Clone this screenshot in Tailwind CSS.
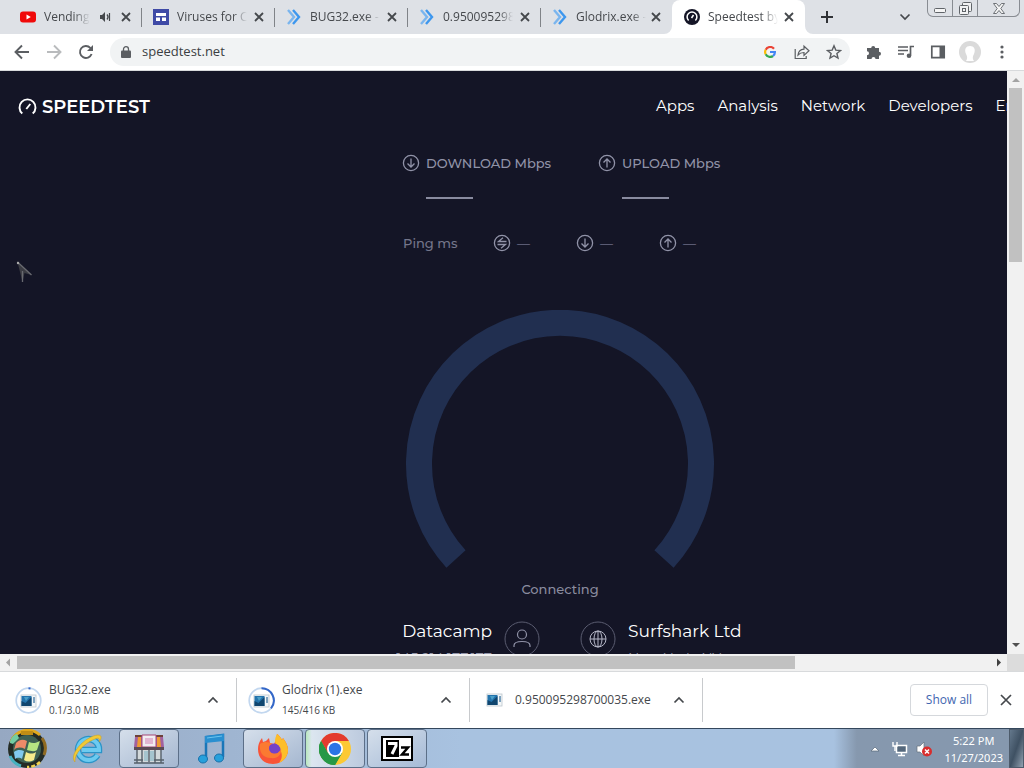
<!DOCTYPE html>
<html lang="en">
<head>
    <meta charset="UTF-8">
    <meta name="viewport" content="width=device-width, initial-scale=1.0">
    <title>Speedtest by Ookla</title>
    <script src="https://cdn.jsdelivr.net/npm/@tailwindcss/browser@4"></script>
</head>
<body class="h-screen overflow-hidden flex flex-col bg-white font-['Open_Sans','Noto_Sans',sans-serif] text-[#45484c]">
    <!-- Shared symbols -->
    <svg class="hidden">
        <symbol id="close" viewBox="0 0 12 12"><path d="M2 2l8 8M10 2l-8 8" fill="none" stroke="currentColor" stroke-width="1.8"/></symbol>
        <symbol id="chevrons" viewBox="0 0 16 16"><path d="M2 1l6 7-6 7" fill="none" stroke="#7ab5ee" stroke-width="2.4"/><path d="M7 1l6 7-6 7" fill="none" stroke="#3d97ee" stroke-width="2.4"/></symbol>
        <symbol id="up" viewBox="0 0 12 12"><path d="M1.500 8.500L6 4l4.500 4.500" fill="none" stroke="currentColor" stroke-width="1.7"/></symbol>
        <symbol id="circle-down" viewBox="0 0 18 18"><g fill="none" stroke="currentColor" stroke-width="1.3"><circle cx="9" cy="9" r="7.600"/><path d="M9 4.500v8.500M5.500 9.500L9 13l3.500-3.500"/></g></symbol>
        <symbol id="circle-up" viewBox="0 0 18 18"><g fill="none" stroke="currentColor" stroke-width="1.3"><circle cx="9" cy="9" r="7.600"/><path d="M9 13.500V5M5.500 8.500L9 5l3.500 3.500"/></g></symbol>
        <symbol id="exe" viewBox="0 0 18 16">
            <rect x="1" y="2" width="15" height="12" fill="#f4f7f8" stroke="#bcc6cc" stroke-width=".8"/>
            <rect x="1.500" y="3" width="10" height="10" fill="#2374ad"/>
            <path d="M1.500 13V8l4 2 6-6v9z" fill="#10466f"/>
            <path d="M4 4h5l-3 4z" fill="#4ba0c8"/>
            <path d="M14 4v6" stroke="#5686ad" stroke-width="1.500"/>
        </symbol>
    </svg>

    <!-- Tab strip -->
    <div class="h-[34px] shrink-0 flex bg-[#dee1e6] text-xs">
        <div class="flex flex-1 min-w-0 pl-[9px]">
            <div class="w-[133px] flex items-center pl-[11px] pr-2.5 relative">
                <svg class="w-4 h-4 shrink-0" viewBox="0 0 16 16"><rect y="2.500" width="16" height="11" rx="3" fill="#f00a0a"/><path d="M6.500 5.500v5L10.800 8z" fill="#fff"/></svg>
                <span class="ml-2 w-[46px] overflow-hidden whitespace-nowrap [mask-image:linear-gradient(to_right,black_65%,transparent)]">Vending Machine</span>
                <svg class="w-3 h-3 ml-2.5 shrink-0" viewBox="0 0 12 12"><path d="M0 4h2l3-3v10L2 8H0z" fill="#45484c"/><path d="M7 3.500c1.300 1.500 1.300 3.500 0 5M9.500 2v8" fill="none" stroke="#45484c" stroke-width="1.200"/></svg>
                <button aria-label="Close tab" class="ml-auto"><svg class="w-3 h-3"><use href="#close"/></svg></button>
                <span class="absolute right-0 top-2 h-[19px] w-px bg-[#808388]"></span>
            </div>
            <div class="w-[133px] flex items-center pl-[11px] pr-2.5 relative">
                <svg class="w-4 h-4 shrink-0" viewBox="0 0 16 16"><rect width="16" height="16" fill="#3f4aa6"/><path d="M3 4h10v3H3zM3 8.500h4V12H3zM9 8.500h4V12H9z" fill="#fff"/></svg>
                <span class="ml-2 w-[70px] overflow-hidden whitespace-nowrap [mask-image:linear-gradient(to_right,black_80%,transparent)]">Viruses for Computers</span>
                <button aria-label="Close tab" class="ml-auto"><svg class="w-3 h-3"><use href="#close"/></svg></button>
                <span class="absolute right-0 top-2 h-[19px] w-px bg-[#808388]"></span>
            </div>
            <div class="w-[133px] flex items-center pl-[11px] pr-2.5 relative">
                <svg class="w-4 h-4 shrink-0"><use href="#chevrons"/></svg>
                <span class="ml-2 w-[70px] overflow-hidden whitespace-nowrap [mask-image:linear-gradient(to_right,black_80%,transparent)]">BUG32.exe - Download</span>
                <button aria-label="Close tab" class="ml-auto"><svg class="w-3 h-3"><use href="#close"/></svg></button>
                <span class="absolute right-0 top-2 h-[19px] w-px bg-[#808388]"></span>
            </div>
            <div class="w-[133px] flex items-center pl-[11px] pr-2.5 relative">
                <svg class="w-4 h-4 shrink-0"><use href="#chevrons"/></svg>
                <span class="ml-2 w-[70px] overflow-hidden whitespace-nowrap [mask-image:linear-gradient(to_right,black_80%,transparent)]">0.950095298700035.exe</span>
                <button aria-label="Close tab" class="ml-auto"><svg class="w-3 h-3"><use href="#close"/></svg></button>
                <span class="absolute right-0 top-2 h-[19px] w-px bg-[#808388]"></span>
            </div>
            <div class="w-[131px] flex items-center pl-[11px] pr-2.5">
                <svg class="w-4 h-4 shrink-0"><use href="#chevrons"/></svg>
                <span class="ml-2 w-[70px] overflow-hidden whitespace-nowrap [mask-image:linear-gradient(to_right,black_80%,transparent)]">Glodrix.exe - Download</span>
                <button aria-label="Close tab" class="ml-auto"><svg class="w-3 h-3"><use href="#close"/></svg></button>
            </div>
            <div class="w-[133px] flex items-center pl-3 pr-2.5 rounded-t-lg bg-white relative">
                <svg class="absolute bottom-0 -left-2 w-2 h-2" viewBox="0 0 8 8"><path d="M8 0v8H0a8 8 0 0 0 8-8z" fill="#fff"/></svg>
                <svg class="absolute bottom-0 -right-2 w-2 h-2" viewBox="0 0 8 8"><path d="M0 0v8h8a8 8 0 0 1-8-8z" fill="#fff"/></svg>
                <svg class="w-4 h-4 shrink-0" viewBox="0 0 16 16"><circle cx="8" cy="8" r="8" fill="#141526"/><path d="M4.600 11.500a4.900 4.900 0 1 1 6.800 0" fill="none" stroke="#fff" stroke-width="1.500"/><path d="M7.500 9l2-3" stroke="#fff" stroke-width="1.500"/></svg>
                <span class="ml-2 w-[70px] overflow-hidden whitespace-nowrap [mask-image:linear-gradient(to_right,black_75%,transparent)]">Speedtest by Ookla</span>
                <button aria-label="Close tab" class="ml-auto"><svg class="w-3 h-3"><use href="#close"/></svg></button>
            </div>
            <button aria-label="New tab" class="ml-4"><svg class="w-3 h-3" viewBox="0 0 12 12"><path d="M6 0v12M0 6h12" stroke="#303236" stroke-width="2"/></svg></button>
        </div>
        <button aria-label="Search tabs" class="mr-4"><svg class="w-3 h-3 rotate-180"><use href="#up"/></svg></button>
        <div class="h-[17px] w-[93px] mr-1 shrink-0 flex border border-t-0 border-[#888c92] rounded-b-md divide-x divide-[#888c92]">
            <button aria-label="Minimize" class="w-[25px] grid place-items-center"><svg class="w-3 h-3 mt-1" viewBox="0 0 12 12"><rect x=".5" y="4.500" width="11" height="4" rx="1" fill="#f5f5f5" stroke="#606469"/></svg></button>
            <button aria-label="Restore" class="w-[25px] grid place-items-center"><svg class="w-[13px] h-[13px]" viewBox="0 0 13 13"><g fill="#f1f2f3" stroke="#606469"><rect x="3.500" y=".5" width="9" height="9" rx="1"/><rect x=".5" y="3.500" width="9" height="9" rx="1"/><rect x="3.500" y="6.500" width="3" height="3"/></g></svg></button>
            <button aria-label="Close window" class="flex-1 grid place-items-center"><svg class="w-3 h-[11px]" viewBox="0 0 12 11"><path d="M.5.5h3L6 3.500 8.500.5h3l-3.700 5 3.700 5h-3L6 7.500l-2.500 3h-3l3.700-5z" fill="#f5f5f5" stroke="#606469" stroke-width=".9"/></svg></button>
        </div>
    </div>

    <!-- Toolbar -->
    <div class="h-[37px] shrink-0 flex items-center pl-3.5 pr-3.5 border-b border-[#d8dadc] text-[#5b5e62]">
        <button aria-label="Back"><svg class="w-4 h-4" viewBox="0 0 16 16"><path d="M15 8H2M8 1.500L1.500 8 8 14.500" fill="none" stroke="currentColor" stroke-width="1.900"/></svg></button>
        <button aria-label="Forward" class="ml-4 text-[#b9bbbd]"><svg class="w-4 h-4" viewBox="0 0 16 16"><path d="M1 8h13M8 1.500L14.500 8 8 14.500" fill="none" stroke="currentColor" stroke-width="1.900"/></svg></button>
        <button aria-label="Reload" class="ml-4"><svg class="w-4 h-4" viewBox="0 0 16 16"><path d="M13.600 10A6 6 0 1 1 12.300 3.800L14 5.500" fill="none" stroke="currentColor" stroke-width="1.900"/><path d="M15 1v6H9z" fill="currentColor"/></svg></button>
        <div class="ml-4 h-7 flex-1 flex items-center rounded-full bg-[#f1f3f4] pl-[11px] pr-2">
            <svg class="w-2.5 h-3 shrink-0" viewBox="0 0 10 12"><rect y="4.500" width="10" height="7.500" rx="1" fill="#5b5e62"/><path d="M2.500 5V3.200a2.500 2.500 0 0 1 5 0V5" fill="none" stroke="#5b5e62" stroke-width="1.300"/></svg>
            <input type="text" aria-label="Address" value="speedtest.net" class="ml-[11px] flex-1 min-w-0 bg-transparent text-[13px] text-[#3b3e42] outline-none">
            <svg class="w-3 h-3 shrink-0" viewBox="0 0 12 12"><g fill="none" stroke-width="2.200"><path d="M10 2.800A5 5 0 0 0 1.700 3.700" stroke="#ea4335"/><path d="M1.700 3.700a5 5 0 0 0 0 4.600" stroke="#fbbc05"/><path d="M1.700 8.300A5 5 0 0 0 9 10" stroke="#34a853"/><path d="M9 10a5 5 0 0 0 1.900-4H6" stroke="#4285f4"/></g></svg>
            <button aria-label="Share" class="ml-[18px]"><svg class="w-4 h-4" viewBox="0 0 16 16"><g fill="none" stroke="currentColor" stroke-width="1.200"><path d="M1.200 5v9.500h11V12"/><path d="M4 11c.5-4 2.500-5.600 6-5.800V2.200l5 4.600-5 4.600V8.500C7 8.500 5.500 9.300 4 11z"/></g></svg></button>
            <button aria-label="Bookmark" class="ml-4"><svg class="w-4 h-4" viewBox="0 0 16 16"><path d="M8 1.800l1.800 4.300 4.700.4-3.600 3 1.100 4.600L8 11.700l-4 2.400 1.100-4.600-3.600-3 4.700-.4z" fill="none" stroke="currentColor" stroke-width="1.400"/></svg></button>
        </div>
        <div class="flex items-center gap-4 ml-4">
            <button aria-label="Extensions"><svg class="w-4 h-4" viewBox="0 0 16 16"><path d="M1 4h4.200a2 2 0 1 1 4 0H13v3.800a2 2 0 1 1 0 4V15H9.500a2 2 0 1 0-4 0H1v-3.700a2 2 0 1 0 0-4z" fill="currentColor"/></svg></button>
            <button aria-label="Media"><svg class="w-4 h-4" viewBox="0 0 16 16"><path d="M0 3h10M0 6.500h10M0 10h6M12.500 11.500V2.500H16" fill="none" stroke="currentColor" stroke-width="1.700"/><circle cx="11" cy="11.800" r="2.300" fill="currentColor"/></svg></button>
            <button aria-label="Side panel"><svg class="w-4 h-4" viewBox="0 0 16 16"><path d="M1.800 2.300h12.400v11.400H1.800z" fill="none" stroke="currentColor" stroke-width="1.700"/><path d="M9.500 2h5v12h-5z" fill="currentColor"/></svg></button>
        </div>
        <button aria-label="Profile" class="ml-[13px]"><svg class="w-[22px] h-[22px]" viewBox="0 0 22 22"><circle cx="11" cy="11" r="11" fill="#dadada"/><path d="M7 20c2-3 1-5 0-7-2-5 0-8 4-8s6 3 4 8c-1 2-2 4 0 7z" fill="#fff"/></svg></button>
        <button aria-label="Menu" class="ml-[13px]"><svg class="w-4 h-4" viewBox="0 0 16 16"><g fill="currentColor"><circle cx="8" cy="3" r="1.600"/><circle cx="8" cy="8" r="1.600"/><circle cx="8" cy="13" r="1.600"/></g></svg></button>
    </div>

    <!-- Page and vertical scrollbar -->
    <div class="flex-1 min-h-0 flex">
        <main class="flex-1 min-w-0 overflow-hidden relative bg-[#141526] text-white font-['Montserrat','Inter',sans-serif]">
            <div class="min-w-[1120px]">
                <header class="h-[71px] flex items-center pl-[18px]">
                    <a href="#" class="flex items-center text-lg font-semibold w-[638px]">
                        <svg class="w-[19px] h-[19px]" viewBox="0 0 19 19"><path d="M4.300 16.500a8 8 0 1 1 10.400 0" fill="none" stroke="#fff" stroke-width="1.900"/><path d="M8.300 12l4-5" stroke="#fff" stroke-width="1.900"/></svg>
                        <span class="ml-[5px]">SPEEDTEST</span>
                    </a>
                    <nav class="flex gap-[23px] text-[15px]">
                        <a href="#">Apps</a>
                        <a href="#">Analysis</a>
                        <a href="#">Network</a>
                        <a href="#">Developers</a>
                        <a href="#">Enterprise</a>
                    </nav>
                </header>

                <section class="w-[316px] mx-auto mt-[11px] text-[13px] leading-5 text-[#9193a8] whitespace-nowrap">
                    <div class="grid grid-cols-[196px_1fr] font-medium">
                        <div>
                            <div class="flex items-center gap-1.5"><svg class="w-[18px] h-[18px] shrink-0"><use href="#circle-down"/></svg>DOWNLOAD Mbps</div>
                            <div class="ml-6 mt-6 w-[47px] h-0.5 bg-[#898b9f]"></div>
                        </div>
                        <div>
                            <div class="flex items-center gap-1.5"><svg class="w-[18px] h-[18px] shrink-0"><use href="#circle-up"/></svg>UPLOAD Mbps</div>
                            <div class="ml-6 mt-6 w-[47px] h-0.5 bg-[#898b9f]"></div>
                        </div>
                    </div>
                    <div class="mt-[34px] flex items-center">
                        <span class="w-[91px] pl-px font-medium text-[#74768b]">Ping ms</span>
                        <span class="w-[83px] flex items-center gap-1.5">
                            <svg class="w-[18px] h-[18px]" viewBox="0 0 18 18"><g fill="none" stroke="currentColor" stroke-width="1.300"><circle cx="9" cy="9" r="7.600"/><path d="M13.500 7.500H5.500L10 3.800M4.500 10.500h8L8 14.200"/></g></svg>—
                        </span>
                        <span class="w-[83px] flex items-center gap-1.5"><svg class="w-[18px] h-[18px]"><use href="#circle-down"/></svg>—</span>
                        <span class="flex items-center gap-1.5"><svg class="w-[18px] h-[18px]"><use href="#circle-up"/></svg>—</span>
                    </div>
                </section>

                <svg class="block w-[308px] h-[260px] mx-auto mt-[57px]" viewBox="0 0 308 260"><path d="M50 249A141 141 0 1 1 258 249" fill="none" stroke="#212f50" stroke-width="26"/></svg>
                <p class="mt-[9px] text-center text-[13px] leading-5 font-medium text-[#8a8c9f]">Connecting</p>

                <section class="mt-5 grid grid-cols-2 gap-10">
                    <div class="flex justify-end gap-3 text-right">
                        <div>
                            <div class="text-[17px] leading-6">Datacamp</div>
                            <div class="mt-1.5 text-sm text-[#9193a8]">145.214.177.177</div>
                        </div>
                        <svg class="mt-0.5 w-9 h-9" viewBox="0 0 36 36"><g fill="none" stroke="#9193a8"><circle cx="18" cy="18" r="17" stroke="#5a5c70"/><circle cx="18" cy="13.500" r="4.500" stroke-width="1.200"/><path d="M10 26v-1.500c0-3 3-4 8-4s8 1 8 4V26" stroke-width="1.200"/></g></svg>
                    </div>
                    <div class="flex gap-3">
                        <svg class="mt-0.5 w-9 h-9" viewBox="0 0 36 36"><g fill="none" stroke="#b6b8c8"><circle cx="18" cy="18" r="17" stroke="#5a5c70"/><circle cx="18" cy="18" r="8"/><ellipse cx="18" cy="18" rx="4" ry="8"/><path d="M18 10v16M10 18h16"/></g></svg>
                        <div>
                            <div class="text-[17px] leading-6">Surfshark Ltd</div>
                            <div class="mt-1.5 text-sm text-[#9193a8]">New York, NY</div>
                        </div>
                    </div>
                </section>
            </div>
            <!-- Mouse pointer -->
            <svg class="absolute left-4 top-[190px] w-[18px] h-6" viewBox="0 0 18 24"><path d="M1.500 1l14 13-7-2-2 9z" fill="#3b3c43"/><path d="M1.500 1l14 13M6.500 10v11" fill="none" stroke="#696a70" stroke-width="1.300"/><circle cx="2" cy="2" r="1.200" fill="#aaa"/></svg>
        </main>
        <div class="w-[17px] shrink-0 flex flex-col items-center bg-[#f1f1f1]">
            <svg class="w-[17px] h-[17px]" viewBox="0 0 17 17"><path d="M5 11h8L9 7z" fill="#a3a3a3"/></svg>
            <div class="w-[13px] h-[174px] bg-[#c1c1c1]"></div>
            <svg class="w-[17px] h-[17px] mt-auto" viewBox="0 0 17 17"><path d="M5 6h8l-4 4z" fill="#505050"/></svg>
        </div>
    </div>

    <!-- Horizontal scrollbar -->
    <div class="h-[17px] shrink-0 flex items-center bg-[#f1f1f1]">
        <svg class="w-[17px] h-[17px]" viewBox="0 0 17 17"><path d="M10 4.500v8l-4-4z" fill="#a3a3a3"/></svg>
        <div class="w-[76%] h-[13px] bg-[#c1c1c1]"></div>
        <svg class="w-[17px] h-[17px] ml-auto" viewBox="0 0 17 17"><path d="M7 4.500v8l4-4z" fill="#404040"/></svg>
        <div class="w-[17px] h-full bg-[#dcdcdc]"></div>
    </div>

    <!-- Downloads -->
    <div class="h-[57px] shrink-0 flex items-center border-t border-[#d8dadc] text-xs">
        <div class="w-[237px] h-11 flex items-center pl-[15px] pr-[17px] border-r border-[#c8cacd]">
            <svg class="w-[27px] h-[27px]" viewBox="0 0 27 27"><circle cx="13.500" cy="13.500" r="12.300" fill="none" stroke="#c2d7ef" stroke-width="1.700"/><path d="M13.500 1.200l2 .2" stroke="#3467c8" stroke-width="2"/><use href="#exe" x="5" y="6" width="18" height="16"/></svg>
            <div class="ml-[7px]"><div class="leading-5">BUG32.exe</div><div class="text-[10px] leading-5">0.1/3.0 MB</div></div>
            <button aria-label="Options for BUG32.exe" class="ml-auto"><svg class="w-3 h-3"><use href="#up"/></svg></button>
        </div>
        <div class="w-[233px] h-11 flex items-center pl-[11px] pr-[17px] border-r border-[#c8cacd]">
            <svg class="w-[27px] h-[27px]" viewBox="0 0 27 27"><circle cx="13.500" cy="13.500" r="12.300" fill="none" stroke="#c2d7ef" stroke-width="1.700"/><path d="M13.500 1.200A12.300 12.300 0 0 1 23 21.300" fill="none" stroke="#3467c8" stroke-width="2"/><use href="#exe" x="5" y="6" width="18" height="16"/></svg>
            <div class="ml-[7px]"><div class="leading-5">Glodrix (1).exe</div><div class="text-[10px] leading-5">145/416 KB</div></div>
            <button aria-label="Options for Glodrix (1).exe" class="ml-auto"><svg class="w-3 h-3"><use href="#up"/></svg></button>
        </div>
        <div class="w-[233px] h-11 flex items-center pl-4 pr-[17px] border-r border-[#c8cacd]">
            <svg class="w-[18px] h-4"><use href="#exe"/></svg>
            <div class="ml-[11px]">0.950095298700035.exe</div>
            <button aria-label="Options for 0.950095298700035.exe" class="ml-auto"><svg class="w-3 h-3"><use href="#up"/></svg></button>
        </div>
        <button class="ml-auto w-[78px] h-8 border border-[#d5d8dc] rounded text-[#3f66b0] font-medium">Show all</button>
        <button aria-label="Close downloads" class="ml-3 mr-3"><svg class="w-3 h-3" viewBox="0 0 12 12"><path d="M1 1l10 10M11 1L1 11" stroke="currentColor" stroke-width="1.700"/></svg></button>
    </div>

    <!-- Taskbar -->
    <div class="h-10 shrink-0 flex items-stretch border-t border-[#34475c] bg-linear-to-r from-[#96a8c2] from-0% via-[#a8c2e0] via-45% to-[#a8c2e0]">
        <button aria-label="Start" class="w-[54px] pl-1.5">
            <svg class="w-[42px] h-[39px]" viewBox="0 0 42 39">
                <circle cx="21" cy="20" r="19" fill="#242c25"/>
                <path d="M5 13A18 18 0 0 1 34 6" fill="none" stroke="#e0a91d" stroke-width="3"/>
                <path d="M36 9a18 18 0 0 1 2 17" fill="none" stroke="#8f6a21" stroke-width="3"/>
                <path d="M34 33a18 18 0 0 1-13 5" fill="none" stroke="#f0d24d" stroke-width="2.500" stroke-dasharray="4 2"/>
                <path d="M4 27a18 18 0 0 0 11 10" fill="none" stroke="#46b2c0" stroke-width="3"/>
                <circle cx="21" cy="20" r="14" fill="#3d6153"/>
                <path d="M10 14c4-4 7-4 11-2l-2 8c-4-2-8-2-11 1z" fill="#ee8a68"/>
                <path d="M23 13c4 2 7 1 11-1l-3 9c-3 2-6 1-10 0z" fill="#b5e582"/>
                <path d="M8 23c4-3 7-2 10-1l-2 8c-3-2-5-1-7 0z" fill="#81c9ee"/>
                <path d="M20 23c4 2 7 2 10 0l-2 8c-4 2-7 2-10 0z" fill="#f6ec8c"/>
                <path d="M4 14c0-4 3-8 7-9l2 4-6 6z" fill="#72cda2"/>
                <path d="M15 2h12v4H15z" fill="#be8d15"/>
            </svg>
        </button>
        <button aria-label="Internet Explorer" class="w-[65px] grid place-items-center">
            <svg class="w-8 h-8" viewBox="0 0 32 32"><path d="M26.500 22A10.500 10.500 0 1 1 28 17H11" fill="none" stroke="#2a94c8" stroke-width="6.500"/><path d="M26.500 22A10.500 10.500 0 1 1 28 17H11" fill="none" stroke="#6ccaf0" stroke-width="4"/><path d="M4 29C-3 22 14 3 27 2c5 0 3 5 1 7 1-3 0-5-4-3C13 10 3 21 4 29z" fill="#f1c936" stroke="#c79a20" stroke-width=".5"/></svg>
        </button>
        <button aria-label="Store" class="w-[60px] grid place-items-center rounded border border-[#5c6f88] bg-linear-to-br from-[#d5dfeb] to-[#a5b7d0]">
            <svg class="w-8 h-8" viewBox="0 0 32 32"><path d="M4 13h24v16H4z" fill="#d2d8da"/><path d="M2 2h28v4H2z" fill="#6d423a"/><path d="M2 4h7v10H1zM23 4h7l1 10h-8z" fill="#a2629e"/><path d="M5 4h3v10H4zM24 4h3l1 10h-4z" fill="#ee9b34"/><path d="M9 2h14v12H9z" fill="#f1edf1" stroke="#a74978"/><path d="M12 5h8v6h-8z" fill="#e2b6d2"/><path d="M1 14h30v3H1z" fill="#5c4a54"/><path d="M4 17v13M9 17v13M22 17v13M28 17v13M1 27h9M21 27h10M1 30h30M16 17v12" stroke="#56606a" stroke-width="1.400"/><path d="M11 18h4v10h-4zM17 18h4v10h-4z" fill="#a5c4ce"/></svg>
        </button>
        <button aria-label="Music" class="w-16 grid place-items-center">
            <svg class="w-7 h-8" viewBox="0 0 28 32"><path d="M9 25V4l17-2v22" fill="none" stroke="#1976b8" stroke-width="2.500"/><path d="M8 3l19-2v7L8 10z" fill="#298fd0"/><ellipse cx="6" cy="26" rx="4.500" ry="4" fill="#26a0dc" stroke="#1870aa"/><ellipse cx="22" cy="25" rx="4.500" ry="4" fill="#26a0dc" stroke="#1870aa"/><path d="M10 5l15-2" stroke="#6bc4ee"/></svg>
        </button>
        <button aria-label="Firefox" class="w-[60px] grid place-items-center rounded border border-[#5c6f88] bg-linear-to-br from-[#d5dfeb] to-[#a5b7d0]">
            <svg class="w-8 h-8" viewBox="0 0 32 32"><path d="M16 31C7 31 1 25 1 16c0-4 1-7 4-11l1 4 3-1 3-3 1 5 4 1 2-4 1-6c2 1 4 4 5 6l1-2c3 4 5 8 5 12 0 8-7 14-15 14z" fill="#f95437"/><path d="M20 1c2 1 4 4 5 6l1-2c3 4 5 8 5 12 0 6-4 11-9 13 3-4 4-8 1-14-2-3-5-4-5-8 0-3 1-5 2-7z" fill="#fdbe29"/><circle cx="17" cy="17" r="6.500" fill="#7542c8"/><path d="M3 11c5-3 8-2 13 0-3 0-4 2-4 4 0 4 3 6 6 5 3 0 5-2 6-4 1 6-4 10-10 9C5 25 2 18 3 11z" fill="#fb7a31"/><circle cx="18" cy="16" r="4.500" fill="#7542c8"/></svg>
        </button>
        <button aria-label="Chrome" class="ml-0.5 w-[60px] grid place-items-center rounded border border-[#5c6f88] bg-linear-to-r from-[#b9e8bd] via-[#dce6f0] via-10% to-[#bccade]">
            <svg class="w-8 h-8" viewBox="0 0 32 32"><circle cx="16" cy="16" r="16" fill="#fcc934"/><path d="M2.100 8A16 16 0 0 1 29.900 8H16z" fill="#e33b2e"/><path d="M2.100 8A16 16 0 0 0 16 32l7-12-14 0z" fill="#279847"/><path d="M2.100 8L9 20l7-12z" fill="#e33b2e"/><path d="M2.100 8A16 16 0 0 0 16 32l6.900-12L16 23l-7-3z" fill="#279847"/><circle cx="16" cy="16" r="8" fill="#fff"/><circle cx="16" cy="16" r="6.200" fill="#2b74e6"/></svg>
        </button>
        <button aria-label="7-Zip" class="ml-0.5 w-[60px] grid place-items-center rounded border border-[#5c6f88] bg-linear-to-br from-[#d5dfeb] to-[#a5bad6]">
            <svg class="w-8 h-[25px]" viewBox="0 0 32 25"><path d="M1 1h30v23H1z" fill="#fff" stroke="#000" stroke-width="2"/><path d="M5 4h13v17H5z"/><path d="M7 7.500h8v2.500l-4 8" fill="none" stroke="#fff" stroke-width="3"/><path d="M20 11.500h7l-6 7h7" fill="none" stroke="#000" stroke-width="2.500"/></svg>
        </button>
        <div class="ml-auto flex items-center bg-linear-to-r from-[#8698ae]/0 to-[#8698ae] to-12% pl-9 text-white">
            <svg class="w-2.5 h-2" viewBox="0 0 10 8"><path d="M1 6h8L5 2z" fill="#fff" stroke="#58677a" stroke-width=".7"/></svg>
            <svg class="ml-3 w-4 h-4" viewBox="0 0 16 16"><path d="M4.500 4.500h10v7h-10z" fill="#55687c" stroke="#fff" stroke-width="1.500"/><path d="M6 14.500h7M9.500 12v3" stroke="#fff" stroke-width="1.500"/><path d="M1 1v4h4V1M3 5v5" fill="none" stroke="#fff" stroke-width="1.400"/></svg>
            <svg class="ml-2 w-4 h-4" viewBox="0 0 16 16"><path d="M1 5h3l4-4v14l-4-4H1z" fill="#fff" stroke="#66717d" stroke-width=".7"/><circle cx="11" cy="10.500" r="5" fill="#d82d2d"/><path d="M9 8.500l4 4M13 8.500l-4 4" stroke="#fff" stroke-width="1.500"/></svg>
            <div class="ml-3 mr-1.5 text-[11px] leading-[17px] text-center font-['Noto_Sans','Open_Sans',sans-serif]"><div>5:22 PM</div><div>11/27/2023</div></div>
            <button aria-label="Show desktop" class="w-[15px] h-full border border-[#4d5b6b] bg-linear-to-br from-[#64788c] via-[#3f5163] to-[#93a2b1]"></button>
        </div>
    </div>
</body>
</html>
